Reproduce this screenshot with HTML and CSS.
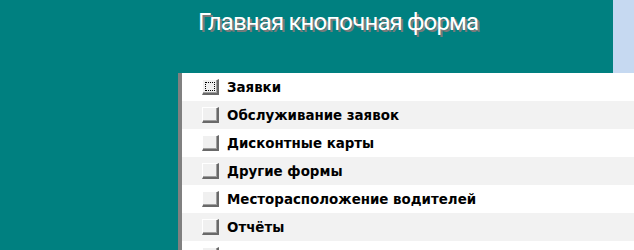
FILE: index.html
```html
<!DOCTYPE html>
<html lang="ru">
<head>
<meta charset="utf-8">
<title>Главная кнопочная форма</title>
<link rel="stylesheet" href="styles.css">
</head>
<body>
<div class="app">
  <header class="header">
    <div class="header-main">
      <h1 class="title">Главная кнопочная форма</h1>
    </div>
    <div class="header-side"></div>
  </header>
  <div class="body">
    <div class="left-pad"></div>
    <div class="divider"></div>
    <ul class="menu">
      <li class="item"><span class="btn focused"></span><span class="label">Заявки</span></li>
      <li class="item alt"><span class="btn"></span><span class="label">Обслуживание заявок</span></li>
      <li class="item"><span class="btn"></span><span class="label">Дисконтные карты</span></li>
      <li class="item alt"><span class="btn"></span><span class="label">Другие формы</span></li>
      <li class="item"><span class="btn"></span><span class="label">Месторасположение водителей</span></li>
      <li class="item alt"><span class="btn"></span><span class="label">Отчёты</span></li>
      <li class="item"><span class="btn"></span></li>
    </ul>
  </div>
</div>
</body>
</html>
```
FILE: styles.css
```css
html, body {
  margin: 0;
  padding: 0;
}
body {
  background: #008080;
  width: 634px;
  height: 250px;
  overflow: hidden;
}
.app {
  display: flex;
  flex-direction: column;
}
.header {
  display: flex;
  height: 73px;
}
.header-main {
  width: 613px;
  background: #008080;
  padding-left: 198px;
  box-sizing: border-box;
}
.header-side {
  flex: 1;
  background: #c6d9f1;
}
.title {
  margin: 0;
  padding-top: 6px;
  font-family: Roboto, "Open Sans", sans-serif;
  font-weight: normal;
  font-size: 24px;
  letter-spacing: -0.85px;
  line-height: 32px;
  color: #ffffff;
  text-shadow: 2px 2px 0 #7a7a7a;
  white-space: nowrap;
}
.body {
  display: flex;
}
.left-pad {
  width: 178px;
}
.divider {
  width: 4px;
  background: #808080;
}
.menu {
  flex: 1;
  list-style: none;
  margin: 0;
  padding: 0;
  background: #ffffff;
}
.item {
  display: flex;
  align-items: center;
  height: 28px;
  padding-left: 20px;
  background: #ffffff;
}
.item.alt {
  background: #f2f2f2;
}
.btn {
  position: relative;
  width: 17px;
  height: 16px;
  box-sizing: border-box;
  background: #f0f0f0;
  border-top: 1px solid #ffffff;
  border-left: 1px solid #ffffff;
  border-right: 2px solid #696969;
  border-bottom: 2px solid #696969;
  box-shadow: inset -1px -1px 0 #a0a0a0;
  flex: none;
}
.btn.focused::after {
  content: "";
  position: absolute;
  left: 2px;
  top: 2px;
  right: 2px;
  bottom: 2px;
  border: 1px dotted #000000;
}
.label {
  margin-left: 8px;
  font-family: "DejaVu Sans", sans-serif;
  font-weight: bold;
  font-size: 13.4px;
  color: #000000;
  white-space: nowrap;
}
```
